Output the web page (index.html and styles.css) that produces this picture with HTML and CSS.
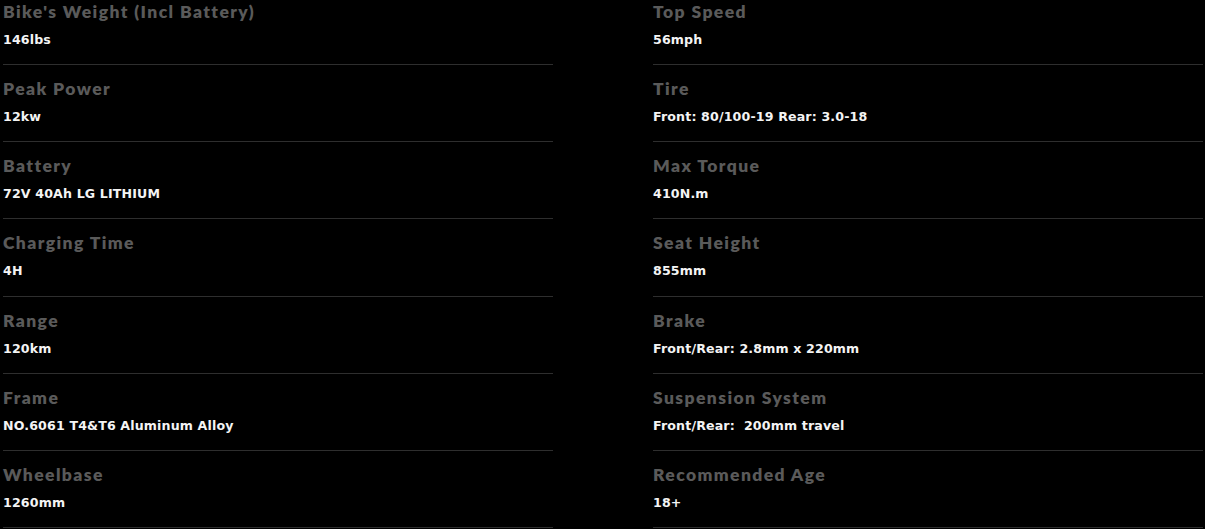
FILE: index.html
```html
<!DOCTYPE html>
<html>
<head>
<meta charset="utf-8">
<link rel="stylesheet" href="styles.css">
</head>
<body>
<div class="specs">
  <div class="col">
    <div class="row"><div class="label">Bike's Weight (Incl Battery)</div><div class="value">146lbs</div></div>
    <div class="row"><div class="label">Peak Power</div><div class="value">12kw</div></div>
    <div class="row"><div class="label">Battery</div><div class="value">72V 40Ah LG LITHIUM</div></div>
    <div class="row"><div class="label">Charging Time</div><div class="value">4H</div></div>
    <div class="row"><div class="label">Range</div><div class="value">120km</div></div>
    <div class="row"><div class="label">Frame</div><div class="value">NO.6061 T4&amp;T6 Aluminum Alloy</div></div>
    <div class="row"><div class="label">Wheelbase</div><div class="value">1260mm</div></div>
  </div>
  <div class="col">
    <div class="row"><div class="label">Top Speed</div><div class="value">56mph</div></div>
    <div class="row"><div class="label">Tire</div><div class="value">Front: 80/100-19 Rear: 3.0-18</div></div>
    <div class="row"><div class="label">Max Torque</div><div class="value">410N.m</div></div>
    <div class="row"><div class="label">Seat Height</div><div class="value">855mm</div></div>
    <div class="row"><div class="label">Brake</div><div class="value">Front/Rear: 2.8mm x 220mm</div></div>
    <div class="row"><div class="label">Suspension System</div><div class="value">Front/Rear:&nbsp; 200mm travel</div></div>
    <div class="row"><div class="label">Recommended Age</div><div class="value">18+</div></div>
  </div>
</div>
</body>
</html>
```
FILE: styles.css
```css
html, body {
  margin: 0;
  padding: 0;
  background: #000;
}
.specs {
  display: grid;
  grid-template-columns: 550px 550px;
  column-gap: 100px;
  padding-left: 3px;
}
.col {
  display: flex;
  flex-direction: column;
}
.row {
  height: 76.2px;
  border-bottom: 1px solid #2e2e2e;
  box-sizing: content-box;
}
.row:first-child {
  margin-top: -12.2px;
}
.label {
  font-family: "Lato", sans-serif;
  font-weight: 800;
  font-size: 17.5px;
  letter-spacing: 1.4px;
  color: #5a5a5a;
  line-height: 24px;
  padding-top: 12px;
}
.value {
  font-family: "DejaVu Sans", sans-serif;
  font-weight: 700;
  font-size: 12.6px;
  letter-spacing: 0.15px;
  color: #f4f4f4;
  line-height: 16px;
  margin-top: 8px;
}
```
